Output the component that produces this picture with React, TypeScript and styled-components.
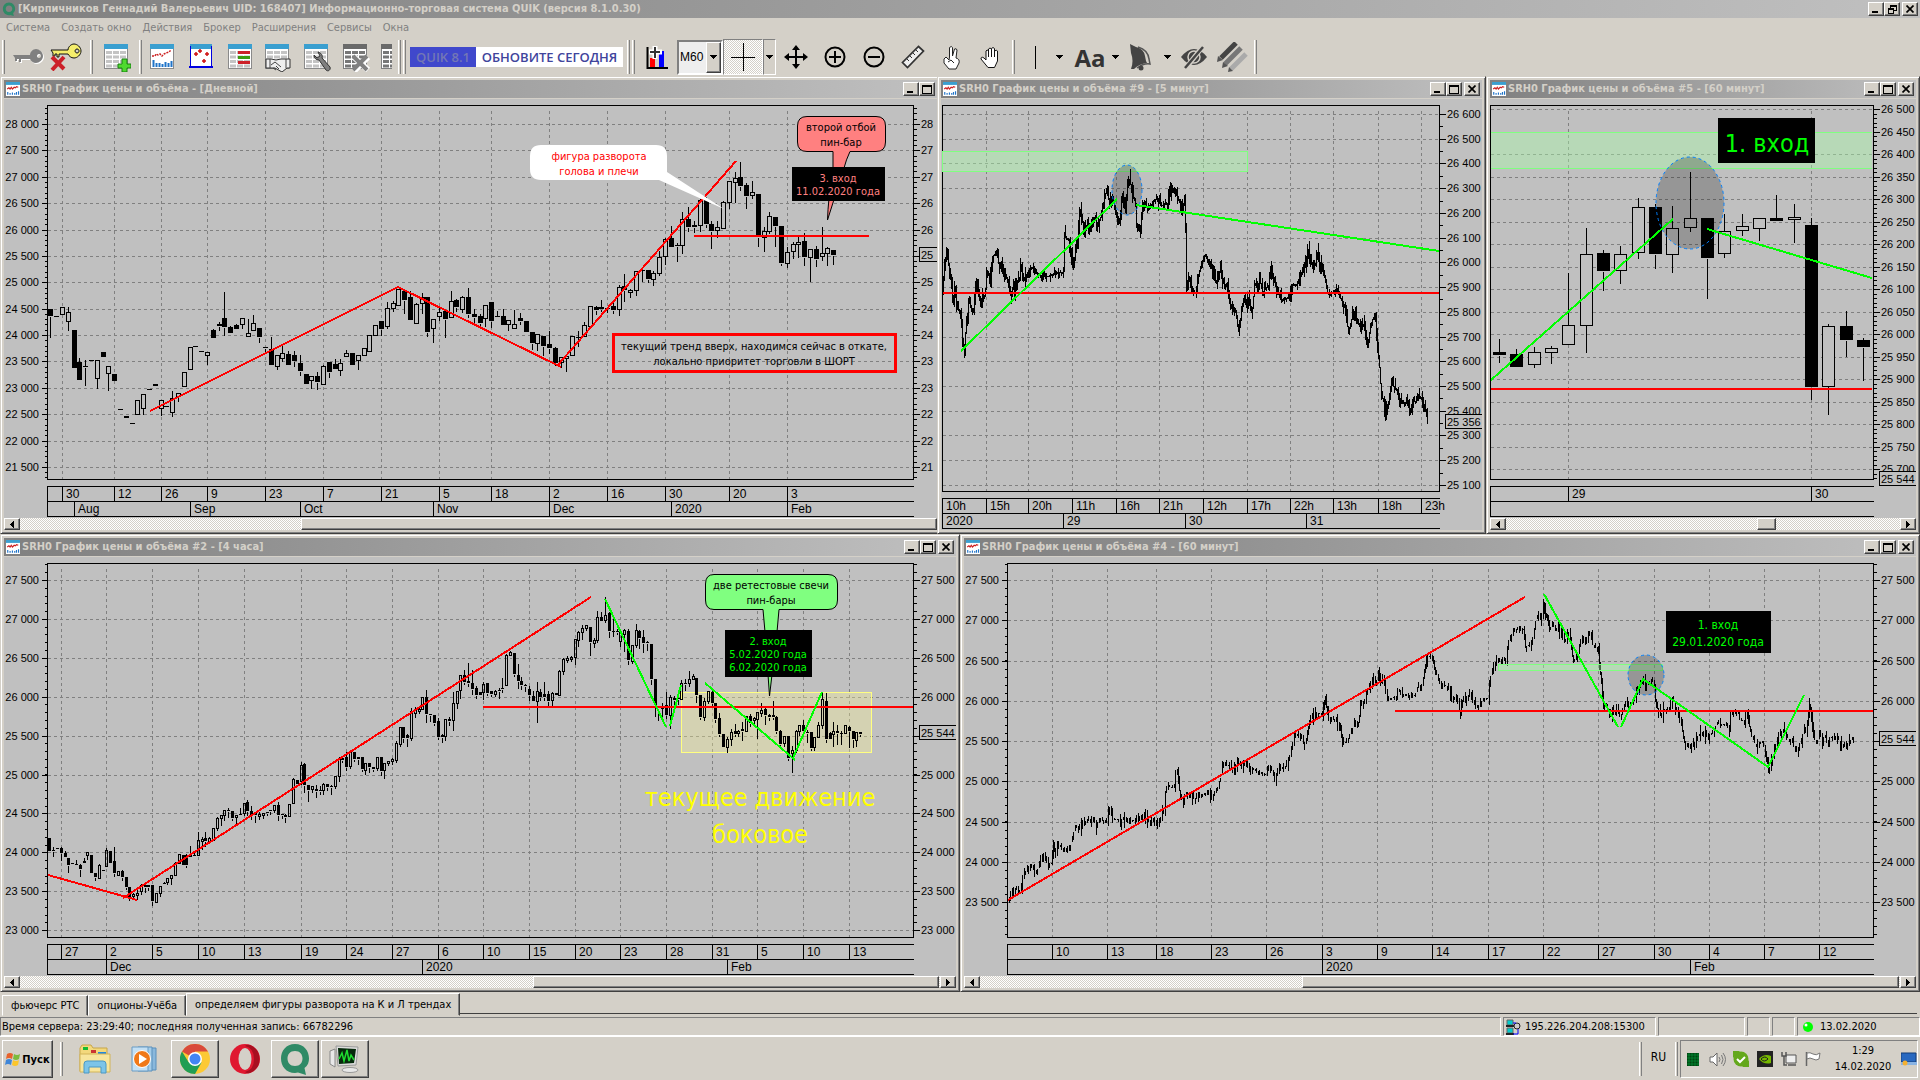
import React from 'react';
import styled, { createGlobalStyle, css } from 'styled-components';

const FACE = '#d4d0c8';
const UI = '"DejaVu Sans Condensed", "DejaVu Sans", Tahoma, sans-serif';
const NARROW = '"Liberation Sans", Arial, sans-serif';

const Global = createGlobalStyle`
  * { box-sizing: border-box; }
  body { margin: 0; background: ${FACE}; font-family: ${UI}; font-size: 11px; color: #000; }
  button, select { font: inherit; color: inherit; padding: 0; margin: 0; border-radius: 0; }
  svg { display: block; flex: none; }
  a { color: inherit; text-decoration: none; }
`;

const raised = css`
  border: 1px solid;
  border-color: #fff #404040 #404040 #fff;
  box-shadow: inset -1px -1px #808080;
  background: ${FACE};
`;
const sunken = css`
  border: 1px solid;
  border-color: #808080 #fff #fff #808080;
`;
const dither = css`
  background: repeating-conic-gradient(#fff 0 25%, ${FACE} 0 50%) 0 0 / 2px 2px;
`;

const Page = styled.div`
  display: flex;
  flex-direction: column;
  min-height: 100vh;
  overflow: hidden;
`;
const TitleBar = styled.header`
  display: flex;
  align-items: center;
  height: 18px;
  flex: none;
  padding: 0 2px 0 2px;
  gap: 2px;
  background: linear-gradient(90deg, #808080, #c0c0c0);
  color: ${FACE};
  font-weight: bold;
  white-space: nowrap;
  overflow: hidden;
`;
const Caption = styled.span`
  flex: 1;
  min-width: 0;
  overflow: hidden;
  font-size: 11px;
  line-height: 18px;
`;
const WinButton = styled.button<{ $gap?: boolean }>`
  ${raised}
  width: 16px;
  height: 14px;
  flex: none;
  margin-left: ${(p) => (p.$gap ? '2px' : '0')};
  display: flex;
  align-items: center;
  justify-content: center;
`;
const WinButtons = styled.div`
  display: flex;
`;
const MenuBar = styled.nav`
  display: flex;
  gap: 11px;
  height: 20px;
  flex: none;
  padding: 0 6px;
  line-height: 20px;
  color: #808080;
`;
const ToolBar = styled.div`
  display: flex;
  align-items: center;
  height: 38px;
  flex: none;
  padding-left: 2px;
  overflow: hidden;
`;
const Grip = styled.span<{ $l?: number; $r?: number }>`
  width: 3px;
  height: 34px;
  flex: none;
  border-left: 1px solid #fff;
  border-right: 1px solid #808080;
  margin: 0 ${(p) => p.$r ?? 0}px 0 ${(p) => p.$l ?? 0}px;
`;
const Tool = styled.button<{ $w?: number }>`
  width: ${(p) => p.$w ?? 39}px;
  height: 36px;
  flex: none;
  border: 0;
  background: none;
  display: flex;
  align-items: center;
  justify-content: center;
  overflow: hidden;
`;
const Pressed = styled(Tool)`
  ${sunken}
  ${dither}
`;
const PressedDrop = styled(Tool)`
  ${sunken}
`;
const BigAa = styled.span`
  font: bold 24px "Open Sans", "Noto Sans", sans-serif;
  color: #333;
`;
const Banner = styled.a`
  display: flex;
  width: 213px;
  height: 20px;
  flex: none;
  font: 600 13px/20px "Open Sans", "Noto Sans", sans-serif;
  text-align: center;
  white-space: nowrap;
`;
const BannerTag = styled.span`
  width: 66px;
  background: #4048cc;
  color: #7377b5;
`;
const BannerText = styled.span`
  flex: 1;
  background: #fff;
  color: #40449c;
`;
const Combo = styled.label`
  display: grid;
  width: 46px;
  height: 35px;
  flex: none;
  border: 2px solid;
  border-color: #808080 #fff #fff #808080;
  background: #eee;
  & > * { grid-area: 1 / 1; }
`;
const ComboSelect = styled.select`
  appearance: none;
  border: 0;
  background: none;
  padding-left: 1px;
  font: 12px ${NARROW};
`;
const ComboArrow = styled.span`
  ${raised}
  justify-self: end;
  width: 15px;
  display: flex;
  align-items: center;
  justify-content: center;
  pointer-events: none;
`;

const Workspace = styled.main`
  flex: 1 1 auto;
  display: grid;
  grid-template-rows: 1fr 1fr;
`;
const WindowRow = styled.div<{ $cols: string }>`
  display: grid;
  grid-template-columns: ${(p) => p.$cols};
  min-height: 0;
`;
const Frame = styled.section<{ $cut?: boolean }>`
  display: flex;
  flex-direction: column;
  min-width: 0;
  min-height: 0;
  padding: 3px;
  border: 1px solid;
  border-color: ${FACE} #404040 #404040 ${FACE};
  box-shadow: inset 1px 1px #fff, inset -1px -1px #808080;
  background: ${FACE};
  ${(p) => p.$cut && css`
    border-right: 0;
    padding-right: 0;
    box-shadow: inset 0 1px #fff, inset 1px 0 #fff, inset 0 -1px #808080;
  `}
`;
const ChartSvg = styled.svg`
  flex: 1 1 0;
  width: 100%;
  min-height: 200px;
  margin-top: 1px;
  background: #c0c0c0;
`;
const ScrollBar = styled.div`
  display: flex;
  height: 12px;
  flex: none;
  ${dither}
`;
const ScrollArrow = styled.button`
  ${raised}
  width: 16px;
  flex: none;
  display: flex;
  align-items: center;
  justify-content: center;
`;
const Track = styled.span<{ $grow: number }>`
  flex: ${(p) => p.$grow} 1 0;
`;
const Thumb = styled.span<{ $grow: number }>`
  ${raised}
  flex: ${(p) => p.$grow} 1 0;
`;

const TabStrip = styled.div`
  display: flex;
  align-items: flex-end;
  height: 24px;
  flex: none;
  padding: 0 3px 0 2px;
  font-size: 12px;
`;
const Tab = styled.button<{ $active?: boolean }>`
  height: ${(p) => (p.$active ? 23 : 21)}px;
  padding: 0 8px;
  background: ${FACE};
  border: 1px solid;
  border-color: #fff #404040 ${FACE} #fff;
  box-shadow: inset -1px 0 #808080;
  white-space: nowrap;
  font-size: 11px;
`;
const TabRule = styled.span`
  flex: 1;
  height: 3px;
  border-top: 1px solid #404040;
`;
const StatusBar = styled.footer`
  display: flex;
  gap: 2px;
  height: 21px;
  flex: none;
  padding-top: 1px;
  border-bottom: 1px solid #fff;
`;
const Cell = styled.div<{ $w?: number }>`
  ${sunken}
  ${(p) => (p.$w ? `width: ${p.$w}px; flex: none;` : 'flex: 1;')}
  display: flex;
  align-items: center;
  gap: 3px;
  padding-left: 1px;
  white-space: nowrap;
  overflow: hidden;
`;
const TaskBar = styled.div`
  display: flex;
  align-items: center;
  gap: 2px;
  height: 43px;
  flex: none;
  padding: 0 2px;
  border-top: 1px solid ${FACE};
`;
const StartButton = styled.button`
  ${raised}
  width: 51px;
  height: 38px;
  display: flex;
  align-items: center;
  justify-content: center;
  gap: 1px;
  font-weight: bold;
`;
const Task = styled.button<{ $open?: boolean }>`
  width: 48px;
  height: 38px;
  display: flex;
  align-items: center;
  justify-content: center;
  border: 0;
  background: none;
  ${(p) => p.$open && raised}
`;
const Spacer = styled.span`
  flex: 1;
`;
const Lang = styled.span`
  font-size: 12px;
  width: 29px;
  text-align: center;
  padding-bottom: 4px;
`;
const Tray = styled.div`
  ${sunken}
  display: flex;
  align-items: center;
  height: 38px;
  width: 238px;
`;
const TrayIcon = styled.span`
  width: 24px;
  display: flex;
  justify-content: center;
`;
const Clock = styled.time`
  flex: 1;
  text-align: center;
  line-height: 16px;
`;

/* ---------- chart data: values are in thirds of a pixel ---------- */

const DAILY = `151 687 687 708 768 1;169 709 709 710 710 1;187 682 682 704 704 0;205 679 697 725 747 0;223 750 750 864 864 1;238 831 846 900 900 1;256 837 859 863 914 1;274 841 842 842 842 1;292 841 841 896 921 0;310 816 816 831 831 1;325 858 858 881 927 0;343 882 882 903 903 1;361 988 988 988 988 1;379 1008 1008 1014 1014 1;397 1030 1030 1030 1030 1;412 958 961 1003 1003 0;430 942 942 986 1001 0;448 928 928 928 928 1;466 912 912 918 918 1;484 961 961 986 1004 0;499 979 979 979 979 1;517 930 955 998 1005 0;535 939 940 948 960 0;553 877 877 920 920 0;571 802 802 868 868 0;586 799 799 799 799 1;604 814 814 814 814 1;622 817 817 826 850 0;640 744 750 774 774 1;658 723 732 738 747 1;673 633 714 741 762 1;691 735 741 759 759 1;709 729 735 747 747 1;727 711 715 734 742 0;745 716 760 770 770 0;760 702 730 751 751 0;778 744 744 771 783 1;796 800 802 806 814 1;814 768 808 855 855 1;832 824 826 860 865 0;847 797 820 836 840 0;865 810 822 855 855 1;883 810 825 843 855 1;901 822 849 873 882 1;919 882 882 912 912 1;934 885 889 902 923 0;952 873 888 908 924 1;970 852 859 913 913 0;988 846 846 876 888 1;1006 834 852 867 867 1;1021 834 850 872 882 0;1039 807 820 830 830 0;1057 816 820 855 855 1;1075 826 826 842 864 0;1093 804 805 826 826 0;1108 766 766 814 814 0;1126 735 736 766 766 0;1144 723 723 747 762 1;1162 663 685 740 742 0;1180 660 670 686 692 0;1195 625 628 676 676 0;1213 630 634 660 696 1;1231 630 652 720 720 1;1249 666 673 731 731 0;1267 636 652 670 696 0;1282 648 651 756 765 1;1300 717 718 745 783 0;1318 680 697 710 718 0;1336 690 693 717 768 1;1354 630 664 712 712 0;1369 655 660 681 692 1;1387 645 652 688 695 0;1405 621 651 702 708 1;1423 684 702 711 729 1;1440 700 708 730 732 1;1456 673 676 715 735 0;1474 667 667 724 738 1;1492 690 708 712 712 1;1510 684 708 735 735 1;1525 720 722 733 748 0;1543 687 734 745 745 0;1561 697 714 724 730 1;1579 723 723 757 757 1;1597 754 756 790 804 1;1612 762 763 790 808 0;1630 768 768 800 822 1;1648 752 792 804 817 1;1666 798 804 850 852 1;1684 828 832 848 860 0;1699 820 830 834 870 0;1717 768 769 826 826 0;1735 750 771 773 796 1;1753 724 736 769 769 0;1771 679 680 738 738 0;1789 676 682 690 700 1;1804 657 682 688 690 1;1822 682 684 686 694 1;1840 668 678 690 696 1;1858 612 622 688 702 0;1873 579 618 632 660 1;1891 625 632 638 648 0;1909 570 574 631 643 0;1927 568 570 572 600 1;1945 570 571 597 603 1;1960 570 580 597 612 0;1978 510 532 580 582 0;1996 471 478 529 549 0;2014 435 474 502 502 1;2032 487 495 499 540 1;2047 393 418 497 516 0;2065 378 417 441 452 1;2083 420 437 441 454 1;2101 355 360 436 450 0;2119 350 358 432 438 1;2134 420 432 453 501 1;2152 420 443 452 468 0;2170 362 367 445 446 0;2188 303 304 368 382 0;2206 273 295 307 364 0;2221 243 292 318 328 1;2239 308 315 348 381 1;2257 300 337 346 353 0;2275 343 343 472 495 1;2293 440 454 471 510 0;2308 393 409 454 456 0;2326 411 411 440 495 1;2344 436 438 551 552 1;2362 500 518 550 558 0;2380 483 493 514 532 0;2395 462 487 492 530 0;2413 456 483 531 552 1;2431 504 508 532 600 0;2449 495 507 537 555 1;2467 438 520 529 537 0;2482 500 505 520 552 0;2500 510 510 525 549 1`;

const H4 = `148 910 910 950 950 1;160 935 945 950 960 1;172 940 940 940 940 1;184 935 940 955 972 1;196 945 955 968 968 1;205 966 970 990 1010 1;217 986 986 986 986 1;229 972 988 992 992 1;241 986 990 1002 1020 1;253 968 980 985 985 1;262 952 953 960 970 0;274 960 962 1015 1015 1;286 1012 1016 1026 1034 1;298 986 992 1030 1030 0;310 1006 1006 1006 1006 1;319 938 945 994 994 0;331 945 948 985 985 1;343 934 980 1016 1022 1;355 1008 1010 1020 1020 0;367 1002 1010 1028 1032 1;379 1026 1026 1058 1060 1;388 1053 1056 1090 1092 1;400 1072 1077 1085 1088 0;412 1060 1075 1078 1090 0;424 1044 1052 1070 1074 0;436 1045 1052 1058 1070 1;446 1048 1052 1056 1062 1;457 1050 1050 1100 1107 1;469 1072 1075 1102 1102 0;481 1050 1055 1075 1080 0;493 1040 1045 1048 1048 1;502 1028 1030 1042 1044 0;514 1020 1022 1030 1044 0;526 980 985 1020 1022 0;538 958 958 985 985 0;550 958 960 992 992 1;559 955 962 990 995 1;571 930 962 966 968 1;583 945 960 965 965 1;595 888 916 962 962 0;607 905 912 916 940 0;616 890 910 920 930 1;628 905 910 918 920 0;640 880 880 915 915 0;652 845 850 880 882 0;664 840 842 850 868 0;673 825 826 840 852 0;685 818 825 830 845 1;697 826 828 850 852 1;709 838 842 848 868 0;721 818 838 842 842 1;733 803 805 835 838 0;742 792 802 828 838 1;754 812 830 845 850 1;766 828 832 842 860 1;778 828 838 845 850 0;790 832 835 842 846 0;802 828 832 835 838 1;811 822 826 830 836 1;823 810 812 826 830 0;835 800 812 840 852 1;847 834 838 842 846 1;856 835 840 846 860 1;868 806 808 844 844 0;880 728 733 806 806 0;892 732 735 748 750 1;904 678 690 738 745 0;913 682 688 752 770 1;925 750 752 765 797 1;937 753 755 764 768 0;949 748 762 768 783 1;961 752 765 768 774 1;970 742 748 766 774 0;982 746 748 758 762 1;994 748 755 758 776 1;1006 724 725 755 758 0;1018 665 670 725 736 0;1027 664 670 675 678 1;1039 650 668 696 702 1;1051 652 652 694 696 0;1063 652 652 672 676 1;1075 664 668 672 684 1;1087 664 668 704 705 1;1096 682 686 705 714 0;1108 684 686 698 708 1;1120 696 698 702 706 1;1132 668 668 700 702 0;1144 664 668 708 718 1;1153 682 686 706 726 0;1165 678 680 685 688 0;1177 666 674 680 684 0;1189 616 626 676 678 0;1201 576 578 628 630 0;1210 576 578 610 620 1;1222 595 602 610 632 1;1234 518 530 610 612 0;1246 514 524 536 545 0;1258 516 522 528 532 0;1267 484 488 524 524 0;1279 462 486 538 560 1;1291 535 538 542 556 1;1303 540 542 566 568 1;1315 546 558 608 610 1;1327 596 602 606 620 1;1336 550 553 604 612 0;1348 544 552 558 568 1;1360 468 505 556 584 0;1372 466 468 505 516 0;1381 420 422 466 486 0;1393 402 420 442 444 1;1405 382 438 446 450 1;1417 402 445 462 476 1;1429 452 460 482 488 1;1440 472 472 482 482 1;1450 440 448 472 490 0;1462 442 445 475 478 1;1474 465 470 478 480 1;1486 462 470 478 480 0;1498 456 466 470 486 1;1507 426 460 464 470 1;1519 354 360 452 452 0;1531 346 352 360 362 0;1543 353 354 418 420 1;1555 386 420 440 456 1;1564 424 438 450 460 1;1576 444 450 455 466 1;1588 450 462 482 492 1;1600 465 484 499 500 1;1612 438 468 499 560 0;1621 460 472 488 492 1;1633 440 478 486 494 1;1645 466 478 500 508 1;1657 470 474 496 514 0;1669 472 474 480 482 1;1678 404 410 482 482 0;1690 368 374 408 416 0;1702 362 370 374 380 0;1714 360 368 372 376 0;1726 310 314 366 386 0;1735 286 292 316 332 0;1747 268 280 292 310 0;1759 272 272 280 282 0;1771 278 278 322 358 1;1783 306 316 324 334 0;1792 226 246 316 320 0;1804 230 246 260 260 1;1816 184 240 256 258 0;1828 228 236 290 304 1;1840 240 288 290 300 1;1852 280 288 292 294 1;1861 280 292 320 332 0;1873 280 286 298 346 0;1885 280 288 376 386 1;1897 330 332 380 382 0;1909 264 286 332 334 0;1918 284 288 310 338 1;1930 282 308 324 348 1;1942 316 322 326 344 1;1954 326 328 432 446 1;1966 430 434 512 542 1;1975 512 515 520 554 1;1987 502 515 520 540 0;1999 470 512 540 546 1;2011 478 486 540 578 0;2023 480 490 496 510 1;2035 480 490 494 506 1;2044 432 444 494 494 0;2056 430 444 448 464 1;2068 406 434 446 450 0;2080 416 424 432 434 0;2089 428 430 480 500 1;2101 480 482 548 550 1;2113 488 500 548 554 0;2125 468 470 500 502 0;2137 466 472 506 508 1;2146 505 506 552 558 1;2158 532 550 598 600 1;2170 594 598 636 638 1;2182 604 614 638 650 0;2194 580 592 614 628 0;2206 564 590 598 600 1;2215 582 588 596 600 0;2227 560 584 588 612 1;2239 540 545 588 590 0;2251 534 545 565 570 1;2263 544 550 556 570 0;2272 528 532 552 606 0;2284 502 526 534 542 0;2296 516 524 542 564 1;2308 534 542 546 552 1;2320 495 540 548 550 1;2329 542 546 590 592 1;2341 584 590 628 632 1;2353 602 604 626 630 0;2365 602 604 670 672 1;2377 632 645 655 710 0;2389 582 588 646 648 0;2398 568 572 590 598 0;2410 552 572 590 592 1;2422 584 592 596 620 1;2434 590 592 640 644 1;2443 604 608 638 642 0;2455 560 572 606 608 0;2467 468 494 570 578 0;2479 472 498 614 618 1;2491 590 595 614 614 1;2501 560 590 598 632 0;2513 568 588 594 624 1;2525 586 594 596 624 1;2537 568 570 594 594 0;2548 572 576 590 634 1;2560 586 590 614 634 1;2570 588 592 616 632 0;2582 590 592 598 602 1`;

const H1ZOOM = `58 774 816 825 843 1;109 804 822 861 861 1;163 798 817 853 858 0;214 795 805 818 846 0;265 576 736 794 794 0;319 441 522 737 813 0;370 507 519 573 627 1;421 495 522 572 606 0;475 351 381 517 531 0;526 369 381 522 561 1;577 375 444 524 573 0;631 273 415 443 450 0;682 414 414 534 651 1;733 399 454 520 528 0;787 399 439 452 462 0;838 415 415 445 477 0;889 342 414 423 423 1;943 369 411 419 484 0;994 411 435 921 954 1;1045 729 738 920 999 0;1099 690 738 780 825 1;1150 771 780 801 897 1`;

const M5 = `34,640 38,560 46,510 52,570 58,610 64,670 68,620 74,680 80,690 86,720 90,780 96,830 98,760 104,700 108,645 112,680 120,700 128,600 134,640 140,675 146,640 152,650 158,575 164,580 168,595 176,525 186,518 192,560 198,540 206,570 212,590 218,600 224,645 230,620 236,635 242,605 250,590 253,540 258,600 266,590 272,590 278,568 286,563 292,575 300,580 310,588 320,588 330,588 340,582 350,578 362,575 372,580 375,465 380,475 388,480 394,525 401,560 406,500 412,480 416,405 421,390 426,430 432,455 438,432 446,448 454,432 460,412 468,440 476,410 484,370 490,340 495,330 500,370 508,355 514,370 520,405 526,430 530,430 536,350 542,380 548,370 553,300 558,295 562,330 568,350 574,370 578,465 582,430 588,450 594,370 604,376 612,385 620,370 628,356 636,360 646,376 656,370 664,370 669,325 680,335 690,342 698,370 706,385 713,340 716,635 722,590 730,620 736,636 742,640 750,590 756,560 764,530 770,522 776,545 784,550 790,580 798,605 806,590 812,560 818,600 824,620 832,615 838,675 846,690 854,690 860,735 864,750 870,695 878,645 884,672 892,655 900,700 908,605 914,620 922,600 930,640 938,622 946,620 953,560 960,590 968,620 976,648 984,660 996,655 1006,650 1014,612 1024,615 1034,590 1044,565 1052,540 1057,495 1062,540 1070,560 1078,550 1083,510 1088,560 1096,548 1104,590 1112,640 1122,640 1130,632 1138,625 1146,650 1154,665 1162,690 1170,760 1178,720 1186,690 1194,720 1204,740 1214,730 1224,795 1232,735 1240,710 1247,710 1250,800 1256,840 1262,945 1268,960 1274,1000 1280,980 1286,940 1291,905 1298,920 1306,930 1314,958 1324,970 1334,966 1342,995 1350,962 1358,965 1365,945 1374,955 1382,978 1388,1000 1393,1020`;

const H1 = `175,1100 178,1082 186,1072 196,1060 204,1068 212,1060 220,1020 226,1005 236,1000 244,990 250,1000 258,1012 266,990 274,970 280,958 286,975 294,985 305,985 309,925 314,948 320,938 328,928 334,945 342,948 350,935 360,930 366,905 372,878 380,872 386,882 392,875 400,866 408,855 414,850 422,860 430,857 438,875 444,857 452,852 460,860 470,855 474,830 481,825 488,850 496,852 504,852 511,870 518,845 524,858 532,848 540,858 550,855 560,847 568,850 576,842 584,838 590,852 598,864 606,857 616,862 622,875 630,850 636,828 642,820 646,755 652,748 660,755 672,755 675,708 682,708 688,775 694,785 699,805 706,778 712,782 722,782 732,792 742,785 752,782 760,775 768,772 778,775 784,785 790,775 796,770 804,748 812,722 817,688 824,690 832,690 840,692 846,710 852,700 860,680 868,690 876,694 884,682 894,685 901,718 906,702 914,702 922,710 932,712 940,718 948,718 952,692 958,690 966,710 974,735 980,712 988,702 996,697 1006,692 1012,682 1018,658 1026,632 1034,598 1042,600 1050,602 1056,606 1062,635 1070,602 1078,550 1084,535 1090,548 1098,536 1106,532 1116,540 1121,492 1126,500 1132,545 1138,560 1146,552 1156,556 1168,566 1172,600 1180,622 1188,620 1196,605 1204,582 1212,567 1220,566 1226,560 1230,495 1236,510 1244,488 1252,462 1262,440 1268,425 1274,440 1280,445 1283,405 1290,440 1296,430 1304,458 1310,483 1318,490 1328,486 1336,492 1342,462 1350,470 1358,480 1366,480 1374,480 1384,480 1394,480 1400,458 1408,450 1414,458 1420,420 1426,382 1434,362 1444,362 1448,370 1454,408 1462,420 1468,448 1478,450 1488,452 1498,465 1506,492 1516,482 1524,508 1531,545 1534,500 1542,475 1550,498 1559,465 1566,500 1576,510 1586,514 1596,495 1608,490 1614,490 1618,430 1624,410 1632,387 1640,372 1648,376 1658,372 1668,378 1672,330 1680,302 1688,290 1696,282 1704,277 1712,280 1720,282 1724,338 1732,330 1740,333 1748,310 1754,262 1760,243 1768,242 1774,255 1780,205 1786,240 1792,242 1798,290 1806,262 1812,284 1820,277 1830,290 1836,310 1844,320 1852,292 1860,310 1868,378 1876,370 1884,342 1892,312 1898,302 1906,320 1914,292 1920,296 1928,330 1936,335 1944,340 1948,400 1954,450 1960,515 1968,510 1974,530 1982,548 1990,526 1996,530 2002,512 2008,550 2016,530 2024,502 2030,510 2038,500 2046,500 2054,490 2060,462 2066,456 2072,442 2080,432 2088,450 2096,440 2104,432 2112,450 2116,508 2122,520 2128,530 2134,545 2140,520 2148,525 2156,520 2162,510 2168,492 2176,520 2184,530 2192,560 2198,600 2204,628 2212,630 2220,638 2226,630 2234,620 2242,602 2252,592 2260,595 2270,604 2280,595 2288,590 2296,572 2304,557 2312,570 2320,566 2328,566 2336,588 2340,540 2348,530 2356,530 2364,532 2372,554 2382,555 2390,532 2396,570 2404,600 2412,620 2420,638 2428,620 2436,620 2442,630 2448,668 2456,708 2462,680 2470,650 2478,612 2486,600 2494,592 2500,582 2508,600 2516,618 2524,612 2532,640 2540,648 2548,630 2556,602 2562,582 2570,580 2576,505 2582,530 2588,590 2594,618 2602,614 2610,592 2616,620 2624,602 2632,618 2640,606 2650,606 2660,602 2668,620 2676,630 2686,634 2696,620 2704,610 2714,610`;

type Tick = [number, string];
interface ChartSpec {
  box: [number, number, number, number];
  frame: [number, number, number, number];
  labels: { first: number; step: number; count: number; y: number; dy: number; minor: number };
  left: boolean;
  cut?: boolean;
  cols: Tick[];
  groups: Tick[];
  last: { y: number; text: string };
}

const money = (v: number) => `${Math.floor(v / 1000)} ${String(v % 1000).padStart(3, '0')}`;

function Axes({ spec }: { spec: ChartSpec }) {
  const [l, t, r, b] = spec.frame;
  const { first, step, count, y, dy, minor } = spec.labels;
  const rows = Array.from({ length: count }, (_, i) => ({ v: first - i * step, y: Math.round(y + i * dy) }));
  let grid = '';
  rows.forEach((row) => (grid += `M${l} ${row.y}H${r}`));
  spec.cols.forEach(([x]) => (grid += `M${x} ${t + 5}V${b}`));
  let ticks = `M${l} ${b}V${t}H${r}V${b}H${l}`;
  const small = dy / minor;
  for (let yy = y - Math.floor((y - t) / small) * small; yy < b; yy += small) {
    const q = Math.round(yy);
    if (spec.left) ticks += `M${l - 3} ${q}H${l}`;
    ticks += `M${r} ${q}H${r + 3}`;
  }
  rows.forEach((row) => {
    if (spec.left) ticks += `M${l - 6} ${row.y}H${l}`;
    ticks += `M${r} ${row.y}H${r + 6}`;
  });
  ticks += `M${r} ${b + 7}H${l}V${b + 37}H${r}M${l} ${b + 22}H${r}`;
  spec.cols.forEach(([x]) => (ticks += `M${x} ${b + 7}V${b + 22}`));
  spec.groups.forEach(([x]) => (ticks += `M${x} ${b + 22}V${b + 37}`));
  const edge = spec.box[0] + spec.box[2];
  const covered = (rowY: number) => Math.abs(rowY - spec.last.y - 7) < 6;
  return (
    <>
      <g transform="translate(.5 .5)" fill="none" shapeRendering="crispEdges">
        <path d={grid} stroke="#808080" strokeDasharray="3 3" />
        <path d={ticks} stroke="#000" />
      </g>
      <g fontFamily={NARROW} fontSize="11">
        {rows.map((row) => (
          <React.Fragment key={row.v}>
            {spec.left && <text x={l - 8} y={row.y + 4} textAnchor="end">{money(row.v)}</text>}
            {!covered(row.y) && <text x={r + 8} y={row.y + 4}>{spec.cut ? Math.floor(row.v / 1000) : money(row.v)}</text>}
          </React.Fragment>
        ))}
        <rect x={r + 6.5} y={spec.last.y + .5} width={edge - r} height="14" fill="#c0c0c0" stroke="#000" />
        <text x={r + 8} y={spec.last.y + 12}>{spec.last.text}</text>
      </g>
      <g fontFamily={NARROW} fontSize="12">
        {spec.cols.map(([x, s]) => <text key={x} x={x + 4} y={b + 19}>{s}</text>)}
        {spec.groups.map(([x, s]) => <text key={x} x={x + 4} y={b + 34}>{s}</text>)}
      </g>
    </>
  );
}

function Candles({ data, x0, y0, half }: { data: string; x0: number; y0: number; half: number }) {
  let solid = '';
  let wick = '';
  let hollow = '';
  data.split(';').forEach((row) => {
    const [x, h, t, b, l, f] = row.split(' ').map(Number);
    const X = x0 + Math.floor(x / 3);
    const [H, T, B, L] = [h, t, b, l].map((v) => y0 + Math.floor(v / 3));
    if (H < T) wick += `M${X} ${H}V${T}`;
    if (L > B) wick += `M${X} ${B}V${L + 1}`;
    if (f) solid += `M${X - half} ${T}h${half * 2 + 1}v${B - T || 1}h${-half * 2 - 1}z`;
    else hollow += `M${X - half} ${T}h${half * 2}v${Math.max(B - T, 2)}h${-half * 2}z`;
  });
  return (
    <g shapeRendering="crispEdges">
      <path d={solid} />
      <path d={wick} fill="none" stroke="#000" transform="translate(.5 .5)" />
      <path d={hollow} fill={half > 1 ? '#c0c0c0' : 'none'} stroke="#000" transform="translate(.5 .5)" />
    </g>
  );
}

interface BarsProps { data: string; x0: number; y0: number; sx: number; amp: number; sparse?: boolean }
function Bars({ data, x0, y0, sx, amp, sparse }: BarsProps) {
  const pts = data.split(' ').map((p) => {
    const [x, y] = p.split(',').map(Number);
    return [x0 + x / sx, y0 + y / 3];
  });
  let seed = 7;
  const rnd = () => ((seed = (seed * 16807) % 2147483647) / 2147483647);
  let d = '';
  let k = 0;
  let prev = pts[0][1];
  for (let x = Math.round(pts[0][0]); x <= pts[pts.length - 1][0]; x++) {
    while (k < pts.length - 2 && pts[k + 1][0] < x) k++;
    const [a, b] = [pts[k], pts[k + 1]];
    const u = Math.min(1, Math.max(0, (x - a[0]) / (b[0] - a[0])));
    const y = a[1] + (b[1] - a[1]) * u;
    const flat = Math.abs(b[1] - a[1]) < 3 ? 0.6 : 1;
    const up = rnd() ** 2 * amp * flat;
    const dn = rnd() ** 2 * amp * flat;
    const skip = sparse && x % 3 === 0 && Math.abs(y - prev) < 5;
    if (!skip) d += `M${x} ${Math.round(Math.min(y, prev) - up)}V${Math.round(Math.max(y, prev) + dn + 1)}`;
    prev = y;
  }
  return <path d={d} stroke="#000" fill="none" transform="translate(.5 0)" shapeRendering="crispEdges" />;
}

const Line = ({ d, c }: { d: string; c: string }) => (
  <path d={d} fill="none" stroke={c} strokeWidth="2" shapeRendering="crispEdges" />
);

const Note = ({ x, y, lines, fill, size = 11, gap = 15 }: { x: number; y: number; lines: string[]; fill: string; size?: number; gap?: number }) => (
  <g fontFamily={UI} fontSize={size} fill={fill} textAnchor="middle">
    {lines.map((s, i) => <text key={s} x={x} y={y + i * gap}>{s}</text>)}
  </g>
);

const Spot = ({ x, y, rx, ry }: { x: number; y: number; rx: number; ry: number }) => (
  <ellipse cx={x} cy={y} rx={rx} ry={ry} fill="rgba(0,0,0,.22)" stroke="#0080ff" strokeDasharray="3 3" />
);

const RED = '#f00';
const LIME = '#0f0';

const daily: ChartSpec = {
  box: [4, 99, 933, 419],
  frame: [47, 105, 913, 479],
  labels: { first: 28000, step: 500, count: 14, y: 124, dy: 26.38, minor: 5 },
  left: true,
  cut: true,
  cols: [[62, '30'], [114, '12'], [161, '26'], [207, '9'], [265, '23'], [323, '7'], [381, '21'], [439, '5'], [491, '18'], [549, '2'], [607, '16'], [665, '30'], [729, '20'], [787, '3']],
  groups: [[74, 'Aug'], [190, 'Sep'], [300, 'Oct'], [433, 'Nov'], [549, 'Dec'], [671, '2020'], [787, 'Feb']],
  last: { y: 247, text: '25' },
};
const m5: ChartSpec = {
  box: [941, 99, 541, 431],
  frame: [942, 105, 1439, 491],
  labels: { first: 26600, step: 100, count: 16, y: 114, dy: 24.73, minor: 2 },
  left: false,
  cols: [[942, '10h'], [986, '15h'], [1028, '20h'], [1072, '11h'], [1116, '16h'], [1159, '21h'], [1203, '12h'], [1247, '17h'], [1290, '22h'], [1333, '13h'], [1378, '18h'], [1421, '23h']],
  groups: [[942, '2020'], [1063, '29'], [1185, '30'], [1306, '31']],
  last: { y: 414, text: '25 356' },
};
const h1zoom: ChartSpec = {
  box: [1490, 99, 426, 419],
  frame: [1490, 105, 1873, 479],
  labels: { first: 26500, step: 50, count: 17, y: 109, dy: 22.5, minor: 5 },
  left: false,
  cols: [[1568, '29'], [1811, '30']],
  groups: [],
  last: { y: 471, text: '25 544' },
};
const h4: ChartSpec = {
  box: [4, 557, 952, 419],
  frame: [47, 563, 913, 937],
  labels: { first: 27500, step: 500, count: 10, y: 580, dy: 38.9, minor: 5 },
  left: true,
  cols: [[61, '27'], [106, '2'], [152, '5'], [198, '10'], [244, '13'], [301, '19'], [346, '24'], [392, '27'], [438, '6'], [483, '10'], [529, '15'], [575, '20'], [620, '23'], [666, '28'], [712, '31'], [757, '5'], [803, '10'], [849, '13']],
  groups: [[106, 'Dec'], [422, '2020'], [727, 'Feb']],
  last: { y: 725, text: '25 544' },
};
const h1: ChartSpec = {
  box: [964, 557, 952, 419],
  frame: [1007, 563, 1873, 937],
  labels: { first: 27500, step: 500, count: 9, y: 580, dy: 40.25, minor: 5 },
  left: true,
  cols: [[1052, '10'], [1107, '13'], [1156, '18'], [1211, '23'], [1266, '26'], [1322, '3'], [1377, '9'], [1432, '14'], [1488, '17'], [1543, '22'], [1598, '27'], [1654, '30'], [1709, '4'], [1764, '7'], [1819, '12']],
  groups: [[1322, '2020'], [1690, 'Feb']],
  last: { y: 731, text: '25 544' },
};

/* ---------- small glyphs ---------- */

const ChartGlyph = ({ size = 14 }: { size?: number }) => (
  <svg width={size} height={size} viewBox="0 0 24 24">
    <path d="M0 0h24v24H0z" fill="#fff" />
    <path d="M0 0h24v5H0z" fill="#3a9fd0" />
    <path d="M2 12l3-2 2 2 2-3 2 3 3-3 2 1 2-2 3 1" fill="none" stroke="#cc2020" strokeWidth="2" />
    <path d="M3 22v-5M7 22v-3M11 22v-4M15 22v-3M18 22v-5M21.500 22v-6" stroke="#2074c8" strokeWidth="2" />
  </svg>
);
const MinGlyph = () => <svg width="8" height="8" shapeRendering="crispEdges"><path d="M0 6h6v2H0z" /></svg>;
const MaxGlyph = () => <svg width="10" height="9" shapeRendering="crispEdges"><path d="M0 0h10v9H0zM1 2v6h8V2z" fillRule="evenodd" /></svg>;
const RestoreGlyph = () => <svg width="9" height="9" shapeRendering="crispEdges"><path d="M2 0h7v6H6v3H0V3h2zM3 2v1h3v2h2V2zM1 5v3h4V5z" fillRule="evenodd" /></svg>;
const CloseGlyph = () => <svg width="8" height="8"><path d="M0.500 0.500l7 7m0-7l-7 7" stroke="#000" strokeWidth="1.700" /></svg>;
const DownGlyph = () => <svg width="7" height="4" shapeRendering="crispEdges"><path d="M0 0h7l-3.500 4z" /></svg>;
const SideGlyph = ({ right }: { right?: boolean }) => <svg width="4" height="7" shapeRendering="crispEdges"><path d={right ? 'M0 0v7l4-3.500z' : 'M4 0v7l-4-3.500z'} /></svg>;
const QLogo = ({ size }: { size: number }) => (
  <svg width={size} height={size} viewBox="0 0 32 32">
    <path fillRule="evenodd" fill="#2f8a66" d="M16 1C7 1 2 8 2 15.500S7 30 16 30c1 0 2 0 3-.4l8 2.400-1.500-7C29 22.500 30 19 30 15.500 30 8 25 1 16 1zm0 7c5 0 7.500 3.500 7.500 7.500S21 23 16 23s-7.500-3.500-7.500-7.500S11 8 16 8z" />
  </svg>
);

const KeyPath = 'M1 7h17c0-3 3-6 6-6s7 3 7 7-4 7-7 7-5-2-6-4H9v3H7v-3H5v2H3v-3zM27 6a2 2 0 1 0 .1 0z';
const Key = () => (
  <svg width="32" height="18" viewBox="0 0 32 18">
    <path d={KeyPath} transform="translate(1 1)" fill="#fff" fillRule="evenodd" />
    <path d={KeyPath} fill="#808080" fillRule="evenodd" />
  </svg>
);
const KeyOff = () => (
  <svg width="32" height="28" viewBox="0 0 32 28">
    <path d={KeyPath} fill="#f5ee6c" stroke="#111" fillRule="evenodd" />
    <path d="M2 14l12 12M14 14L2 27" stroke="#cc2028" strokeWidth="4" />
  </svg>
);
const Table = ({ gray, children, w = 24 }: { gray?: boolean; children?: React.ReactNode; w?: number }) => (
  <svg width={w} height="29" viewBox={`0 0 ${w} 29`}>
    <path d="M0 1h24v25H0z" fill={gray ? '#808080' : '#8a8a8a'} />
    <path d="M1 6h22v19H1z" fill="#fff" />
    <path d="M0 1h24v5H0z" fill={gray ? '#6a6a6a' : '#3a9fd0'} />
    <path d="M2 9.500h20M2 14h20M2 18.500h20M2 23h20" stroke={gray ? '#777' : '#c4c4c4'} strokeWidth="3" strokeDasharray="6 1" />
    {children}
  </svg>
);
const Wrench = ({ c, s }: { c: string; s: string }) => (
  <path d="M10 12c0 3 2 5 5 5l7 10c2 2 5 0 4-3l-8-9c1-3-1-5-4-6l2 4-3 2z" fill={c} stroke={s} />
);
const Plot24 = () => (
  <svg width="24" height="29" viewBox="0 0 24 29"><g transform="translate(0 1)">
    <path d="M0 0h24v25H0z" fill="#8a8a8a" /><path d="M1 5h22v19H1z" fill="#fff" /><path d="M0 0h24v5H0z" fill="#3a9fd0" />
    <path d="M2 12h3l1-2 2 1 2-1 2 2 2-2 2-1 3-1 2-2" fill="none" stroke="#cc2020" strokeWidth="1.500" strokeDasharray="2 1" />
    <path d="M3.500 23v-7M6.500 23v-4M9.500 23v-4M12.500 23v-3M15.500 23v-5M18.500 23v-4M21.500 23v-6" stroke="#2074c8" strokeWidth="2" />
  </g></svg>
);
const Scatter = () => (
  <svg width="24" height="29" viewBox="0 0 24 29"><g transform="translate(0 1)">
    <path d="M1 0h22v23H1z" fill="#fff" /><path d="M1 0h22v5H1z" fill="#3a9fd0" />
    <path d="M1.500 2v21M22.500 2v21" stroke="#0000e0" /><path d="M0 23h24" stroke="#0000e0" strokeWidth="2" />
    <path d="M5 10h4m-2-2v4M9 7h4m-2-2v4M16 10h4m-2-2v4M13 17h4m-2-2v4" stroke="#d01010" strokeWidth="1.500" />
  </g></svg>
);

interface WinProps { title: string; spec: ChartSpec; cut?: boolean; scroll?: [number, number, number]; children: React.ReactNode }
function ChartWindow({ title, spec, cut, scroll, children }: WinProps) {
  return (
    <Frame $cut={cut}>
      <TitleBar as="div">
        <ChartGlyph />
        <Caption>{title}</Caption>
        <WinButtons>
          <WinButton aria-label="Свернуть"><MinGlyph /></WinButton>
          <WinButton aria-label="Развернуть"><MaxGlyph /></WinButton>
          {!cut && <WinButton $gap aria-label="Закрыть"><CloseGlyph /></WinButton>}
        </WinButtons>
      </TitleBar>
      <ChartSvg viewBox={spec.box.join(' ')} preserveAspectRatio="xMinYMin meet" role="img" aria-label={title}>
        <Axes spec={spec} />
        {children}
      </ChartSvg>
      {scroll && (
        <ScrollBar>
          <ScrollArrow aria-label="Влево"><SideGlyph /></ScrollArrow>
          <Track $grow={scroll[0]} />
          <Thumb $grow={scroll[1]} />
          <Track $grow={scroll[2]} />
          {!cut && <ScrollArrow aria-label="Вправо"><SideGlyph right /></ScrollArrow>}
        </ScrollBar>
      )}
    </Frame>
  );
}

const MENU = ['Система', 'Создать окно', 'Действия', 'Брокер', 'Расширения', 'Сервисы', 'Окна'];

export default function App() {
  return (
    <Page>
      <Global />
      <TitleBar>
        <QLogo size={14} />
        <Caption>[Кирпичников Геннадий Валерьевич UID: 168407] Информационно-торговая система QUIK (версия 8.1.0.30)</Caption>
        <WinButtons>
          <WinButton aria-label="Свернуть"><MinGlyph /></WinButton>
          <WinButton aria-label="Восстановить"><RestoreGlyph /></WinButton>
          <WinButton $gap aria-label="Закрыть"><CloseGlyph /></WinButton>
        </WinButtons>
      </TitleBar>
      <MenuBar>{MENU.map((m) => <a key={m} href="#menu">{m}</a>)}</MenuBar>

      <ToolBar>
        <Grip $r={4} />
        <Tool $w={38} aria-label="Подключиться"><Key /></Tool>
        <Tool $w={38} aria-label="Отключиться"><KeyOff /></Tool>
        <Grip $l={5} $r={5} />
        <Tool aria-label="Создать таблицу"><Table w={27}><path d="M18 16h5v5h4v4h-4v4h-5v-4h-4v-4h4z" fill="#4fd92f" stroke="#188010" /></Table></Tool>
        <Grip $l={2} />
        <Tool aria-label="График"><Plot24 /></Tool>
        <Tool aria-label="Точки"><Scatter /></Tool>
        <Tool aria-label="Стакан"><Table><path d="M10 8h12v3H10zM10 18h12v3H10z" fill="#cc2028" /><path d="M10 13h12v3H10z" fill="#3a9a10" /></Table></Tool>
        <Tool aria-label="Сделки"><Table w={27}><path d="M1 16h5l5 1 5-1h9v9h-3l-5 4-7-4H1z" fill="#eee" stroke="#333" /><path d="M6 22l4-3 6 5M8 25l3 2m0-4l3 3M5 16v9M21 16v9" stroke="#444" fill="none" /></Table></Tool>
        <Tool aria-label="Настройка"><Table w={27}><Wrench c="#808080" s="#333" /></Table></Tool>
        <Tool aria-label="Удалить"><Table gray w={27}><path d="M11 14l14 13M25 14L11 28" stroke="#fff" strokeWidth="6" /><path d="M10 13l14 14M24 13L10 27" stroke="#808080" strokeWidth="4" /></Table></Tool>
        <Tool $w={21} aria-label="Ещё"><Table gray w={11} /></Tool>
        <Grip $l={1} $r={2} />
        <Grip $r={4} />
        <Banner href="#update"><BannerTag>QUIK 8.1</BannerTag><BannerText>ОБНОВИТЕ СЕГОДНЯ</BannerText></Banner>
        <Grip $l={4} $r={2} />
        <Grip $r={1} />
        <Tool $w={41} aria-label="Добавить график"><svg width="22" height="26" viewBox="0 0 22 26"><path d="M1.500 3v21H22" fill="none" stroke="#000" strokeWidth="2" /><path d="M4 14h5v9H4z" fill="#f00" /><path d="M13 7h5v16h-5z" fill="#00f" /><path d="M9 2v13M3 8h13" stroke="#fff" strokeWidth="5" /><path d="M9 3v11M4 8h10" stroke="#333" strokeWidth="2" /></svg></Tool>
        <Combo aria-label="Интервал"><ComboSelect defaultValue="M60"><option>M60</option></ComboSelect><ComboArrow><DownGlyph /></ComboArrow></Combo>
        <Pressed $w={40} aria-label="Перекрестие"><svg width="24" height="28" shapeRendering="crispEdges"><path d="M12.500 0v28M0 14.500h24" stroke="#000" /></svg></Pressed>
        <PressedDrop $w={13} aria-label="Вид курсора"><DownGlyph /></PressedDrop>
        <Tool aria-label="Переместить"><svg width="24" height="24"><path d="M12 2v20M2 12h20" stroke="#000" strokeWidth="2" /><path d="M12 0l4 5H8zM12 24l4-5H8zM0 12l5-4v8zM24 12l-5-4v8z" /></svg></Tool>
        <Tool aria-label="Увеличить"><svg width="22" height="22"><circle cx="11" cy="11" r="9.500" fill="none" stroke="#000" strokeWidth="2" /><path d="M11 5v12M5 11h12" stroke="#000" strokeWidth="2" /></svg></Tool>
        <Tool aria-label="Уменьшить"><svg width="22" height="22"><circle cx="11" cy="11" r="9.500" fill="none" stroke="#000" strokeWidth="2" /><path d="M5 11h12" stroke="#000" strokeWidth="2" /></svg></Tool>
        <Tool aria-label="Линейка"><svg width="24" height="24"><path d="M17.500 1.500l5 4.500L6.500 22.500l-5-5z" fill="#eee" stroke="#333" strokeWidth="1.700" /><path d="M15 5l2 2M12 8l2 2M9 11l2 2M6 14l2 2" stroke="#333" /></svg></Tool>
        <Tool aria-label="Указать"><svg width="18" height="25"><path d="M6.500 12V2.500q2-2 3 0V11l2-7q2-1 2.500 1L13 13q4 1 3 5l-3 6H6l-5-6q-1-5 2-6l3 3z" fill="#fff" stroke="#222" /><path d="M5 17l3-2 3 3" fill="none" stroke="#222" /></svg></Tool>
        <Tool aria-label="Рука"><svg width="21" height="22"><path d="M6 14V5q1-2 2.500 0V3q1.500-2 3 0v-.5q1.500-2 3 0V5q2-1.500 3 0v10l-3 6.500H8L1 13q0-3 3-1z" fill="#fff" stroke="#111" /><path d="M8.500 5v6M11.500 3v8M14.500 4v7" stroke="#111" /></svg></Tool>
        <Grip $l={2} $r={8} />
        <Tool $w={24} aria-label="Линия"><svg width="1" height="23"><path d="M0 0h1v23H0z" /></svg></Tool>
        <Tool $w={25} aria-label="Виды линий"><DownGlyph /></Tool>
        <Tool $w={36} aria-label="Текст"><BigAa>Aa</BigAa></Tool>
        <Tool $w={14} aria-label="Вид текста"><DownGlyph /></Tool>
        <Tool $w={38} aria-label="Оповещение"><svg width="24" height="27"><path d="M1 0l6 3q8 2 9 9l1 5 1 2Q10 20 5 25H2q3-8 0-16z" fill="#444" /><path d="M9 3q10 3 11 12l1 5q-6-1-13 4" fill="none" stroke="#555" strokeWidth="1.500" /><circle cx="12" cy="24" r="2.500" fill="#444" /></svg></Tool>
        <Tool $w={14} aria-label="Вид оповещения"><DownGlyph /></Tool>
        <Tool aria-label="Скрыть"><svg width="28" height="24"><path d="M1 12Q14-4 27 12 14 28 1 12z" fill="#444" /><circle cx="14" cy="12" r="6" fill="none" stroke="#d4d0c8" strokeWidth="1.500" /><path d="M24 0L5 24" stroke="#d4d0c8" strokeWidth="5" /><path d="M23 2L5 23" stroke="#444" strokeWidth="2.500" /></svg></Tool>
        <Tool aria-label="Карандаши"><svg width="32" height="30"><path d="M29 12L14 27" stroke="#aaa" strokeWidth="5" /><path d="M24 6L8 22" stroke="#777" strokeWidth="5" /><path d="M19 1L4 16" stroke="#444" strokeWidth="5" /><path d="M0 20l1-6 5 4zM5 26l1-6 5 4zM11 30l1-5 4 4z" fill="#555" /></svg></Tool>
        <Grip $l={2} />
      </ToolBar>

      <Workspace>
        <WindowRow $cols="minmax(0, 937fr) minmax(0, 549fr) minmax(0, 434fr)">
          <ChartWindow title="SRH0 График цены и объёма - [Дневной]" spec={daily} cut scroll={[282, 635, 0]}>
            <Candles data={DAILY} x0={0} y0={80} half={2} />
            <Line c={RED} d="M150 411L398 287L561 367M557 366L736 161M694 236H869" />
            <path d="M541 145H656Q667 145 667 156V172L724 209L659 180H541Q530 180 530 169V156Q530 145 541 145z" fill="#fff" />
            <Note x={599} y={160} fill={RED} lines={['фигура разворота', 'голова и плечи']} />
            <path d="M807 116.500H876Q885.500 116.500 885.500 126V142Q885.500 151.500 876 151.500H850Q846 160 844 168L827.500 220Q828 200 833 168V151.500H807Q797.500 151.500 797.500 142V126Q797.500 116.500 807 116.500z" fill="#ff8080" stroke="#000" />
            <Note x={841} y={131} fill="#000" lines={['второй отбой', 'пин-бар']} />
            <rect x="792" y="167" width="93" height="34" />
            <Note x={838} y={182} gap={13} fill="#ff8080" lines={['3. вход', '11.02.2020 года']} />
            <rect x="613.500" y="334.500" width="282" height="37" fill="none" stroke={RED} strokeWidth="3" />
            <Note x={754} y={350} fill="#000" lines={['текущий тренд вверх, находимся сейчас в откате,', 'локально приоритет торговли в ШОРТ']} />
          </ChartWindow>

          <ChartWindow title="SRH0 График цены и объёма #9 - [5 минут]" spec={m5}>
            <rect x="942.500" y="151.500" width="305" height="20" fill="rgba(170,255,170,.4)" stroke="#80ff80" />
            <Bars data={M5} x0={930} y0={80} sx={2.8} amp={10} />
            <Spot x={1127} y={190} rx={15} ry={25} />
            <Line c={RED} d="M943 293H1439" />
            <Line c={LIME} d="M961 351L1117 199M1136 205L1439 251" />
          </ChartWindow>

          <ChartWindow title="SRH0 График цены и объёма #5 - [60 минут]" spec={h1zoom} scroll={[252, 17, 125]}>
            <path d="M1491 132h381v37h-381z" fill="rgba(170,255,170,.4)" />
            <path d="M1491 132.500h381m-381 36h381" stroke="#80ff80" />
            <Candles data={H1ZOOM} x0={1480} y0={80} half={6} />
            <Spot x={1690} y={203} rx={34} ry={46} />
            <Line c={RED} d="M1491 389H1872" />
            <Line c={LIME} d="M1491 380L1673 219M1707 229L1872 278" />
            <rect x="1718" y="118" width="97" height="45" />
            <Note x={1767} y={152} size={25} fill={LIME} lines={['1. вход']} />
          </ChartWindow>
        </WindowRow>

        <WindowRow $cols="minmax(0, 1fr) minmax(0, 1fr)">
          <ChartWindow title="SRH0 График цены и объёма #2 - [4 часа]" spec={h4} scroll={[514, 405, 1]}>
            <rect x="681.500" y="692.500" width="190" height="60" fill="rgba(255,248,150,.32)" stroke="#ffff80" />
            <Candles data={H4} x0={0} y0={535} half={1} />
            <Line c={RED} d="M48 875L137 900M123 898L591 597M483 707H913" />
            <Line c={LIME} d="M605 599L666 727M670 726L681 685M705 683L795 760M793 758L822 692" />
            <path d="M714 574.500H828Q837.500 574.500 837.500 584V600Q837.500 609.500 828 609.500H779L777 632L769.500 696L765 632L763 609.500H714Q705.500 609.500 705.500 600V584Q705.500 574.500 714 574.500z" fill="#80ff80" stroke="#000" />
            <Note x={771} y={589} fill="#000" lines={['две ретестовые свечи', 'пин-бары']} />
            <rect x="725" y="630" width="87" height="47" />
            <Note x={768} y={645} gap={13} fill={LIME} lines={['2. вход', '5.02.2020 года', '6.02.2020 года']} />
            <Note x={760} y={806} size={25} gap={37} fill="#ff0" lines={['текущее движение', 'боковое']} />
          </ChartWindow>

          <ChartWindow title="SRH0 График цены и объёма #4 - [60 минут]" spec={h1} scroll={[323, 596, 1]}>
            <Bars data={H1} x0={950} y0={535} sx={3} amp={8} sparse />
            <rect x="1498.500" y="664.500" width="164" height="6" fill="rgba(170,255,170,.4)" stroke="#80ff80" />
            <Spot x={1646} y={675} rx={18} ry={20} />
            <Line c={RED} d="M1008 900L1525 597M1395 711H1873" />
            <Line c={LIME} d="M1544 594L1618 727M1621 727L1643 679L1768 767L1804 695" />
            <rect x="1666" y="611" width="105" height="42" />
            <Note x={1718} y={629} size={12} gap={17} fill={LIME} lines={['1. вход', '29.01.2020 года']} />
          </ChartWindow>
        </WindowRow>
      </Workspace>

      <TabStrip role="tablist">
        <Tab role="tab">фьючерс РТС</Tab>
        <Tab role="tab">опционы-Учёба</Tab>
        <Tab role="tab" $active>определяем фигуры разворота на К и Л трендах</Tab>
        <TabRule />
      </TabStrip>
      <StatusBar>
        <Cell>Время сервера: 23:29:40; последняя полученная запись: 66782296</Cell>
        <Cell $w={153}>
          <svg width="17" height="16"><path d="M2 1h6v5H2zM2 9h6v5H2z" fill="#0cc" stroke="#666" /><path d="M1 7h8M1 15h8" stroke="#222" strokeWidth="2" /><circle cx="12" cy="7" r="3" fill="#ccc" stroke="#222" /><path d="M13 10v5H8M8 4h3" stroke="#00f" fill="none" /></svg>
          195.226.204.208:15300
        </Cell>
        <Cell $w={87} />
        <Cell $w={23} />
        <Cell $w={23} />
        <Cell $w={123}>
          <svg width="18" height="12"><circle cx="9" cy="6" r="5" fill="#0f0" /><circle cx="7" cy="4" r="1.500" fill="#fff" /></svg>
          13.02.2020
        </Cell>
      </StatusBar>
      <TaskBar>
        <StartButton>
          <svg width="16" height="15"><path d="M2 2q3-2 6 0L7 7Q4 5 1 7z" fill="#e8622c" /><path d="M9 2q3 2 6 0l-1 5q-3 2-6 0z" fill="#7cbb3c" /><path d="M1 8q3-2 6 0l-1 5q-3-2-6 0z" fill="#3f86d8" /><path d="M8 8q3 2 6 0l-1 5q-3 2-6 0z" fill="#fcc62c" /></svg>
          Пуск
        </StartButton>
        <Grip $l={5} $r={6} />
        <Task aria-label="Проводник"><svg width="34" height="30"><path d="M2 4l2-3h9l2 3h14v23H2z" fill="#f3d87c" stroke="#c8a648" /><path d="M5 3h5v3H5z" fill="#1b3" /><path d="M13 6h5v3h-5z" fill="#c33" /><path d="M20 8h8v3h-8z" fill="#28d" /><path d="M2 10h30v18H2z" fill="#f8e59c" stroke="#d2b458" /><path d="M6 29v-9q0-3 3-3h16q3 0 3 3v9h-5v-6H11v6z" fill="#7cc4e8" stroke="#4a98c4" /></svg></Task>
        <Task aria-label="Медиаплеер"><svg width="28" height="26"><path d="M12 2h13v22H12z" fill="#8ab8dc" stroke="#5a90bc" /><path d="M7 1h14v24H7z" fill="#a4cce8" stroke="#5a90bc" /><path d="M1 1h16v24H1z" fill="#c4e0f4" stroke="#6a9cc4" /><circle cx="11" cy="13" r="8.500" fill="#f07818" stroke="#fff" /><path d="M8 8l8 5-8 5z" fill="#fff" /></svg></Task>
        <Task $open aria-label="Chrome"><svg width="30" height="30" viewBox="0 0 30 30"><circle cx="15" cy="15" r="15" fill="#fcc934" /><path d="M15 15L2 7.500A15 15 0 0 1 28 7.500H15z" fill="#d94a3c" /><path d="M2 7.500A15 15 0 0 0 15 30l6.500-11.500L15 15 8.500 18z" fill="#219e54" /><circle cx="15" cy="15" r="7" fill="#fff" /><circle cx="15" cy="15" r="5.500" fill="#4285f4" /></svg></Task>
        <Task aria-label="Opera"><svg width="30" height="30"><ellipse cx="15" cy="15" rx="15" ry="15" fill="#e01830" /><path d="M20 1q9.500 4 9.500 14T20 29q-3 1-5-1 9-2 9-13T15 2q2-2 5-1z" fill="#a80f20" /><ellipse cx="15" cy="15" rx="6.500" ry="11" fill="#d4d0c8" /></svg></Task>
        <Task $open aria-label="QUIK"><QLogo size={32} /></Task>
        <Task $open aria-label="Монитор"><svg width="32" height="28"><path d="M1 6l5-2v18l-5-3z" fill="#e8e8e8" stroke="#888" /><path d="M7 1l22 1-2 18-18 1z" fill="#ddd" stroke="#999" /><path d="M9 3l18 1-2 14-15 1z" fill="#062a0c" /><path d="M10 14l3-6 2 8 3-11 2 11 2-6 3 5" fill="none" stroke="#1fdc30" strokeWidth="1.500" /><ellipse cx="21" cy="25" rx="8" ry="2.500" fill="#e8e8e8" stroke="#999" /></svg></Task>
        <Spacer />
        <Grip />
        <Lang>RU</Lang>
        <Grip />
        <Tray>
          <TrayIcon><svg width="12" height="13"><path d="M0 0h12v13H0z" fill="#041" /><path d="M0 2h12M0 5h12M0 8h12M0 11h12M2 0v13M5 0v13M8 0v13M11 0v13" stroke="#0a4" strokeWidth=".5" /></svg></TrayIcon>
          <TrayIcon><svg width="17" height="15"><path d="M1 5h3l4-4v13l-4-4H1z" fill="#fff" stroke="#666" /><path d="M10 5q2 2.500 0 5M12.500 3q3 4.500 0 9M14 1q5 6.500 0 13" fill="none" stroke="#777" /></svg></TrayIcon>
          <TrayIcon><svg width="16" height="16"><circle cx="8" cy="8" r="7.500" fill="#64a81c" /><path d="M0 0h7L0 7zM16 16H9l7-7z" fill="#64a81c" /><path d="M4 8l3 3 5-5" fill="none" stroke="#fff" strokeWidth="2" /></svg></TrayIcon>
          <TrayIcon><svg width="16" height="16"><path d="M0 0h16v16H0z" fill="#222" /><path d="M2 8q5-6 12-3v7Q7 14 2 8z" fill="#76b900" /><path d="M4 8q4-4 7 0-4 4-7 0z" fill="#76b900" stroke="#222" /></svg></TrayIcon>
          <TrayIcon><svg width="16" height="16"><path d="M5 4h10v8H5z" fill="#eee" stroke="#555" /><path d="M7 14h8M1 1v4h4V1M3 5v9h3" fill="none" stroke="#555" strokeWidth="1.500" /></svg></TrayIcon>
          <TrayIcon><svg width="16" height="16"><path d="M1.500 1v14" stroke="#666" strokeWidth="1.500" /><path d="M2 2q3-1 6 1t7-1l-1 6q-3 2-6 0T2 8z" fill="#fff" stroke="#777" /></svg></TrayIcon>
          <Clock>1:29<br />14.02.2020</Clock>
          <svg width="16" height="14"><path d="M0 1h15v9H0z" fill="#2868c0" stroke="#123c78" /><path d="M0 10h16v3H0z" fill="#8ab4e4" /><circle cx="4" cy="11" r="2.500" fill="#f4b030" /></svg>
        </Tray>
      </TaskBar>
    </Page>
  );
}
